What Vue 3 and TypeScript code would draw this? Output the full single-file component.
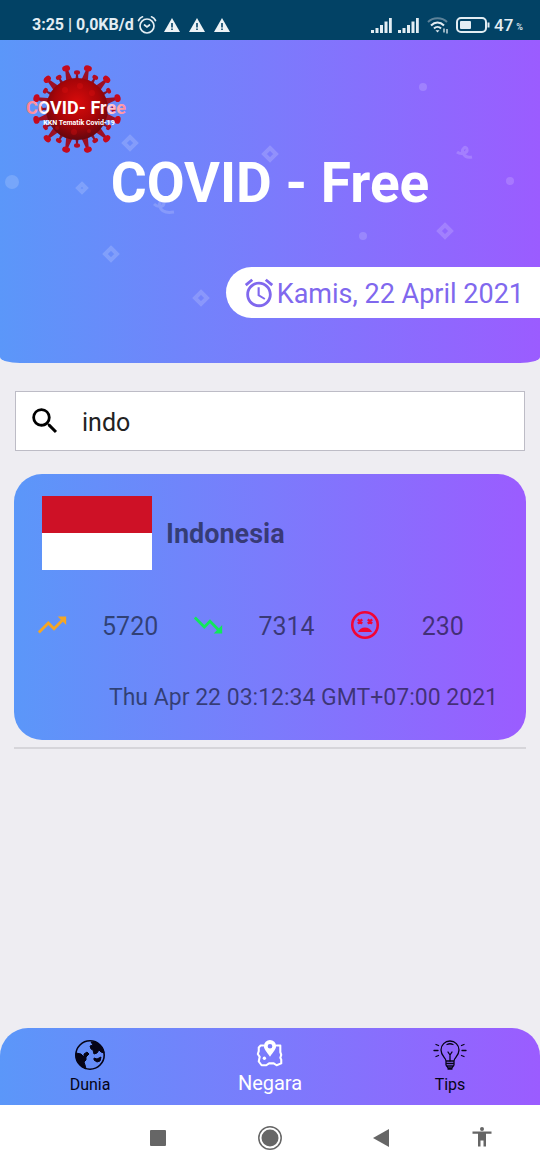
<script setup lang="ts">
import { computed, ref } from 'vue'

interface Country {
  name: string
  positive: number
  recovered: number
  deaths: number
  updated: string
}

const countries: Country[] = [
  {
    name: 'Indonesia',
    positive: 5720,
    recovered: 7314,
    deaths: 230,
    updated: 'Thu Apr 22 03:12:34 GMT+07:00 2021',
  },
]

const query = ref('indo')
const results = computed(() =>
  countries.filter((c) => c.name.toLowerCase().includes(query.value.trim().toLowerCase())),
)

const diamonds = [
  { x: 130, y: 103, r: 6 },
  { x: 82, y: 148, r: 4 },
  { x: 270, y: 114, r: 6 },
  { x: 111, y: 214, r: 6 },
  { x: 201, y: 258, r: 6 },
  { x: 445, y: 191, r: 6 },
]
const dots = [
  { x: 12, y: 142, r: 7 },
  { x: 423, y: 47, r: 4 },
  { x: 510, y: 141, r: 4 },
  { x: 363, y: 196, r: 4 },
]
const longSpikes = Array.from({ length: 12 }, (_, i) => 15 + i * 30)
const shortSpikes = Array.from({ length: 12 }, (_, i) => i * 30)
</script>

<template>
  <div class="screen">
    <div class="status">
      <span class="clock">3:25 | 0,0KB/d</span>
      <svg class="st-alarm" viewBox="0 0 20 20" width="20" height="20" fill="none" stroke="#e3edf3" stroke-width="1.7" stroke-linecap="round">
        <circle cx="10" cy="11" r="7" />
        <path d="M1.500 5.500C2.500 3.500 4 2.300 5.500 1.800M18.500 5.500C17.500 3.500 16 2.300 14.500 1.800M7.500 10l2.500 2 2.500-2" />
      </svg>
      <svg v-for="n in 3" :key="n" class="st-warn" viewBox="0 0 16 16" width="16" height="16">
        <path d="M8 1L16 15H0z" fill="#eef3f6" />
        <path d="M7.200 6h1.600v4.500H7.200zM7.200 11.500h1.600V13H7.200z" fill="#074366" />
      </svg>
      <span class="spacer"></span>
      <svg v-for="n in 2" :key="'s' + n" class="signal" viewBox="0 0 21 16" width="21" height="16" fill="#e3edf3">
        <path d="M0 13h3v3H0zM4.500 11h3v5h-3zM9 8h3v8H9zM13.500 4.500h3V16h-3zM18 1h2.800v15H18z" />
      </svg>
      <svg class="wifi" viewBox="0 0 22 18" width="22" height="18" fill="none" stroke="#e3edf3" stroke-width="2">
        <path d="M1 6C6 1 15 1 20 6" stroke="#5d8299" />
        <path d="M4 9.500C8 5.500 13 5.500 17 9.500M7 12.500C9 10.500 12 10.500 14 12.500" />
        <path d="M10.500 16.500L8.500 14.300h4z" fill="#e3edf3" stroke="none" />
        <path d="M17 12.500v4M20 13v4.500" stroke-width="1.300" />
      </svg>
      <svg class="battery" viewBox="0 0 34 16" width="34" height="16">
        <rect x="1" y="1" width="29" height="14" rx="4" fill="none" stroke="#e3edf3" stroke-width="2" />
        <rect x="4" y="4" width="11" height="8" rx="1" fill="#e3edf3" />
        <path d="M31.500 5.500h2v5h-2z" fill="#e3edf3" />
      </svg>
      <span class="level">47</span><span class="percent">%</span>
    </div>

    <header class="hero">
      <svg class="confetti" viewBox="0 0 540 323" preserveAspectRatio="xMidYMid slice" aria-hidden="true">
        <g fill="none" stroke="#fff" stroke-opacity="0.17" stroke-width="4">
          <path v-for="(d, i) in diamonds" :key="i" :d="`M${d.x} ${d.y - d.r}l${d.r} ${d.r}l${-d.r} ${d.r}l${-d.r} ${-d.r}z`" />
          <path d="M154 164c4 4 10 3 10-1s-6-2-4 4 8 6 14 5" stroke-width="3" />
          <path d="M457 112c4 3 11 1 10-3s-6 0-4 4 5 5 9 4" stroke-width="3" />
        </g>
        <circle v-for="(d, i) in dots" :key="'c' + i" :cx="d.x" :cy="d.y" :r="d.r" fill="#fff" fill-opacity="0.16" />
      </svg>

      <svg class="logo" viewBox="0 0 100 90" width="100" height="90" role="img" aria-label="COVID-Free KKN Tematik Covid-19">
        <defs>
          <radialGradient id="virus" cx="0.500" cy="0.400" r="0.600">
            <stop offset="0" stop-color="#d90b0b" />
            <stop offset="0.600" stop-color="#a80508" />
            <stop offset="1" stop-color="#64060e" />
          </radialGradient>
          <linearGradient id="wordmark" x1="0" x2="1">
            <stop offset="0" stop-color="#ff7f91" />
            <stop offset="0.120" stop-color="#ff9caa" />
            <stop offset="0.170" stop-color="#fff" />
            <stop offset="0.720" stop-color="#fff" />
            <stop offset="1" stop-color="#ff8798" />
          </linearGradient>
        </defs>
        <g v-for="angle in longSpikes" :key="angle" :transform="`rotate(${angle} 50 45)`">
          <path d="M46.500 17L48.800 4h2.400l2.300 13z" fill="#9c1024" />
          <ellipse cx="50" cy="3" rx="4" ry="3" fill="#c50a1c" />
        </g>
        <g v-for="angle in shortSpikes" :key="angle" :transform="`rotate(${angle} 50 45)`">
          <path d="M48.200 17L49.300 9h1.400l1.100 8z" fill="#85112c" />
          <ellipse cx="50" cy="8.500" rx="3" ry="2.200" fill="#b50c20" />
        </g>
        <circle cx="50" cy="45" r="31" fill="url(#virus)" />
        <g fill="#e61212" opacity="0.300">
          <circle cx="38" cy="26" r="3" /><circle cx="53" cy="22" r="3" /><circle cx="65" cy="29" r="3" />
          <circle cx="30" cy="64" r="2" /><circle cx="47" cy="68" r="3" /><circle cx="62" cy="67" r="2" />
        </g>
        <text class="wordmark" x="49" y="50" text-anchor="middle" fill="url(#wordmark)">COVID- Free</text>
        <text class="tagline" x="52" y="61" text-anchor="middle" fill="#fff">KKN Tematik Covid-19</text>
      </svg>

      <h1>COVID - Free</h1>

      <div class="date">
        <svg viewBox="0 0 24 24" width="34" height="34" fill="currentColor" aria-hidden="true">
          <path d="M22 5.720l-4.600-3.860-1.290 1.530 4.600 3.860L22 5.720zM7.880 3.390L6.600 1.860 2 5.710l1.290 1.530 4.590-3.850zM12.500 8H11v6l4.750 2.850.75-1.230-4-2.370V8zM12 4c-4.970 0-9 4.030-9 9s4.020 9 9 9c4.970 0 9-4.030 9-9s-4.030-9-9-9zm0 16c-3.870 0-7-3.130-7-7s3.130-7 7-7 7 3.130 7 7-3.130 7-7 7z" />
        </svg>
        <span>Kamis, 22 April 2021</span>
      </div>
    </header>

    <main>
      <label class="search">
        <svg viewBox="0 0 24 24" width="34" height="34" aria-hidden="true">
          <path d="M15.500 14h-.79l-.28-.27A6.471 6.471 0 0 0 16 9.500 6.500 6.500 0 1 0 9.500 16c1.610 0 3.090-.59 4.230-1.570l.27.28v.79l5 4.990L20.490 19l-4.990-5zm-6 0C7.010 14 5 11.990 5 9.500S7.010 5 9.500 5 14 7.010 14 9.500 11.990 14 9.500 14z" />
        </svg>
        <input v-model="query" type="text" aria-label="Cari negara" />
      </label>

      <ul class="list">
        <li v-for="c in results" :key="c.name">
          <article class="card">
            <div class="country">
              <svg class="flag" viewBox="0 0 110 74" width="110" height="74" role="img" aria-label="Bendera Indonesia">
                <path d="M0 0h110v37H0z" fill="#ce1126" />
                <path d="M0 37h110v37H0z" fill="#fff" />
              </svg>
              <h2>{{ c.name }}</h2>
            </div>
            <div class="stats">
              <div class="stat">
                <svg viewBox="0 0 24 24" width="34" height="34" fill="#f5a623" aria-hidden="true">
                  <path d="M16 6l2.290 2.290-4.880 4.880-4-4L2 16.590 3.410 18l6-6 4 4 6.300-6.290L22 12V6z" />
                </svg>
                <span>{{ c.positive }}</span>
              </div>
              <div class="stat">
                <svg viewBox="0 0 24 24" width="34" height="34" fill="#11e85b" aria-hidden="true">
                  <path d="M16 18l2.290-2.290-4.880-4.880-4 4L2 7.410 3.410 6l6 6 4-4 6.300 6.290L22 12v6z" />
                </svg>
                <span>{{ c.recovered }}</span>
              </div>
              <div class="stat">
                <svg viewBox="0 0 24 24" width="34" height="34" aria-hidden="true">
                  <circle cx="12" cy="12" r="9" fill="none" stroke="#f20535" stroke-width="1.800" />
                  <path d="M7 8l3 3m0-3l-3 3M14 8l3 3m0-3l-3 3" stroke="#f20535" stroke-width="1.600" />
                  <path d="M7 17c.8-2 2.700-3.300 5-3.300s4.200 1.300 5 3.300z" fill="#f20535" />
                </svg>
                <span>{{ c.deaths }}</span>
              </div>
            </div>
            <time>{{ c.updated }}</time>
          </article>
        </li>
      </ul>
    </main>

    <nav class="tabs">
      <a href="#dunia">
        <svg viewBox="0 0 32 32" width="32" height="32" aria-hidden="true">
          <circle cx="16" cy="16" r="14.200" fill="none" stroke="currentColor" stroke-width="1.600" />
          <path d="M2 14l5 1 3 3 0-3 3-2 2 2-3 3 0 3-2 2 1 3 1 4C6 27 2 22 2 16zM17 3l4 0c5 2 8 6 9 11l-3-1-2-2-2 3-3 1-1-4-2-1-1-3 3-1zM20 19l3 1 4-2-1 4-3 1-3-2z" fill="currentColor" stroke="currentColor" stroke-linejoin="round" />
        </svg>
        <span>Dunia</span>
      </a>
      <a href="#negara" class="active" aria-current="page">
        <svg viewBox="0 0 32 32" width="32" height="32" aria-hidden="true">
          <path d="M9 7H6L4 9v4l-1 3 2 3-1 5 3 4h5l3-2h5l3 2 5-2v-4l-1-2 1-3-1-3V7h-4" fill="none" stroke="currentColor" stroke-width="2.200" stroke-linejoin="round" stroke-linecap="round" />
          <path d="M16 1a6.500 6.500 0 0 0-6.500 6.500C9.500 11 12 13 16 19c4-6 6.500-8 6.500-11.500A6.500 6.500 0 0 0 16 1zm0 4.200a2.500 2.500 0 1 1 0 5 2.500 2.500 0 0 1 0-5z" fill="currentColor" fill-rule="evenodd" />
          <circle cx="10" cy="20.500" r="1.800" fill="currentColor" />
        </svg>
        <span>Negara</span>
      </a>
      <a href="#tips">
        <svg viewBox="0 0 34 32" width="34" height="32" fill="none" stroke="currentColor" stroke-width="1.300" stroke-linecap="round" stroke-linejoin="round" aria-hidden="true">
          <path d="M13 22c0-3-5-5-5-11a9 9 0 0 1 18 0c0 6-5 8-5 11zM13 22v4l2 3h4l2-3v-4M13 24.500h8M13.500 27h7M15 30h4" />
          <path d="M17 22v-6l-2-3M17 16l2-3M14 5.500c2-1 4-1 6 0M1 11.500h4M29 11.500h4M3 5.500l2.500 1M31 5.500l-2.500 1M3 17.500l2.500-1M31 17.500l-2.500-1" />
        </svg>
        <span>Tips</span>
      </a>
    </nav>

    <div class="system">
      <button type="button" aria-label="Aplikasi terbaru">
        <svg viewBox="0 0 24 24" width="24" height="24"><rect x="4" y="4" width="16" height="16" rx="1" fill="#666" /></svg>
      </button>
      <button type="button" aria-label="Beranda">
        <svg viewBox="0 0 24 24" width="24" height="24">
          <circle cx="12" cy="12" r="11.200" fill="none" stroke="#666" stroke-width="1.500" />
          <circle cx="12" cy="12" r="8.500" fill="#666" />
        </svg>
      </button>
      <button type="button" aria-label="Kembali">
        <svg viewBox="0 0 24 24" width="24" height="24"><path d="M4 12L20 3v18z" fill="#666" /></svg>
      </button>
      <button type="button" aria-label="Aksesibilitas">
        <svg viewBox="0 0 24 24" width="24" height="24" fill="#666">
          <circle cx="12" cy="3" r="2" />
          <path d="M2.500 5.500h19v2.200H16V20.500h-2.500v-6h-3v6H8V7.700H2.500z" />
        </svg>
      </button>
    </div>
  </div>
</template>

<style>
body {
  margin: 0;
  background: #eeedf2;
}
</style>

<style scoped>
.screen {
  --grad: linear-gradient(90deg, #5b97f9 0%, #7b7bfc 50%, #9b5cff 100%);
  display: flex;
  flex-direction: column;
  min-height: 100vh;
  background: #eeedf2;
  font-family: Roboto, 'Noto Sans', sans-serif;
}

svg {
  display: block;
  flex: none;
}

.status {
  display: flex;
  align-items: center;
  box-sizing: border-box;
  height: 40px;
  padding: 10px 17px 0 32px;
  background: #024265;
  color: #e3edf3;
  font-size: 17px;
  font-weight: 500;
  line-height: 20px;
}

.clock {
  font-size: 16px;
  font-weight: 700;
}

.st-alarm {
  margin-left: 3px;
}

.st-warn {
  margin-left: 9px;
}

.st-alarm + .st-warn {
  margin-left: 7px;
}

.spacer {
  flex: 1;
}

.signal {
  margin-right: 6px;
}

.wifi {
  margin: 0 7px 0 2px;
}

.level {
  margin-left: 4px;
}

.percent {
  margin: 4px 0 0 3px;
  font-size: 9px;
  line-height: 12px;
}

.hero {
  position: relative;
  display: flex;
  flex-direction: column;
  box-sizing: border-box;
  padding: 24px 0 45px;
  background: var(--grad);
  border-radius: 0 0 20px 20px / 0 0 6px 6px;
  overflow: hidden;
}

.confetti {
  position: absolute;
  inset: 0;
  width: 100%;
  height: 100%;
}

.logo {
  position: relative;
  margin-left: 27px;
  overflow: visible;
}

.wordmark {
  font-size: 18px;
  font-weight: 700;
}

.tagline {
  font-size: 7px;
  font-weight: 700;
}

h1 {
  position: relative;
  margin: 0;
  color: #fff;
  font-size: 55px;
  font-weight: 700;
  line-height: 58px;
  text-align: center;
}

.date {
  position: relative;
  display: flex;
  align-items: center;
  align-self: flex-end;
  gap: 1px;
  box-sizing: border-box;
  height: 51px;
  margin-top: 55px;
  padding: 0 16px;
  background: #fff;
  border-radius: 26px 0 0 26px;
  color: #8068ee;
  font-size: 27px;
  line-height: 34px;
}

.date span {
  padding-top: 2px;
}

main {
  flex: 1;
  padding: 28px 14px;
}

.search {
  display: flex;
  align-items: center;
  box-sizing: border-box;
  height: 60px;
  margin: 0 1px;
  padding: 0 12px;
  background: #fff;
  border: 1px solid #bdbcc6;
}

.search input {
  flex: 1;
  min-width: 0;
  margin-left: 20px;
  padding: 4px 0 0;
  border: 0;
  outline: 0;
  background: none;
  color: #222;
  font-family: inherit;
  font-size: 25px;
  line-height: 30px;
}

.list {
  margin: 23px 0 0;
  padding: 0;
  list-style: none;
}

.list li {
  padding-bottom: 7px;
  border-bottom: 2px solid #d6d5da;
}

.card {
  display: flex;
  flex-direction: column;
  padding: 22px 0 27px;
  background: var(--grad);
  border-radius: 28px;
  color: rgba(0, 0, 0, 0.54);
}

.country {
  display: flex;
  align-items: center;
  padding: 0 28px;
}

h2 {
  margin: 0 0 0 14px;
  padding-top: 2px;
  font-size: 27px;
  font-weight: 700;
  line-height: 32px;
}

.stats {
  display: grid;
  grid-template-columns: repeat(3, 1fr);
  margin: 36px 22px 0 21px;
}

.stat {
  display: flex;
  align-items: center;
  font-size: 25px;
  line-height: 34px;
}

.stat span {
  flex: 1;
  padding-top: 4px;
  text-align: center;
}

time {
  margin: 39px 28px 0;
  font-size: 23px;
  line-height: 30px;
  text-align: right;
}

.tabs {
  display: grid;
  grid-template-columns: repeat(3, 1fr);
  height: 77px;
  background: var(--grad);
  border-radius: 28px 28px 0 0;
}

.tabs a {
  display: flex;
  flex-direction: column;
  align-items: center;
  padding-top: 11px;
  color: #060417;
  font-size: 16px;
  line-height: 28px;
  text-decoration: none;
}

.tabs a.active {
  color: #fff;
  font-size: 20px;
}

.tabs a.active svg {
  height: 30px;
}

.system {
  display: grid;
  grid-template-columns: 112fr 112fr 110fr 94fr;
  align-items: center;
  height: 65px;
  padding: 0 2% 0 19%;
  background: #fff;
}

.system button {
  display: flex;
  justify-content: center;
  padding: 8px 0;
  border: 0;
  background: none;
}
</style>
